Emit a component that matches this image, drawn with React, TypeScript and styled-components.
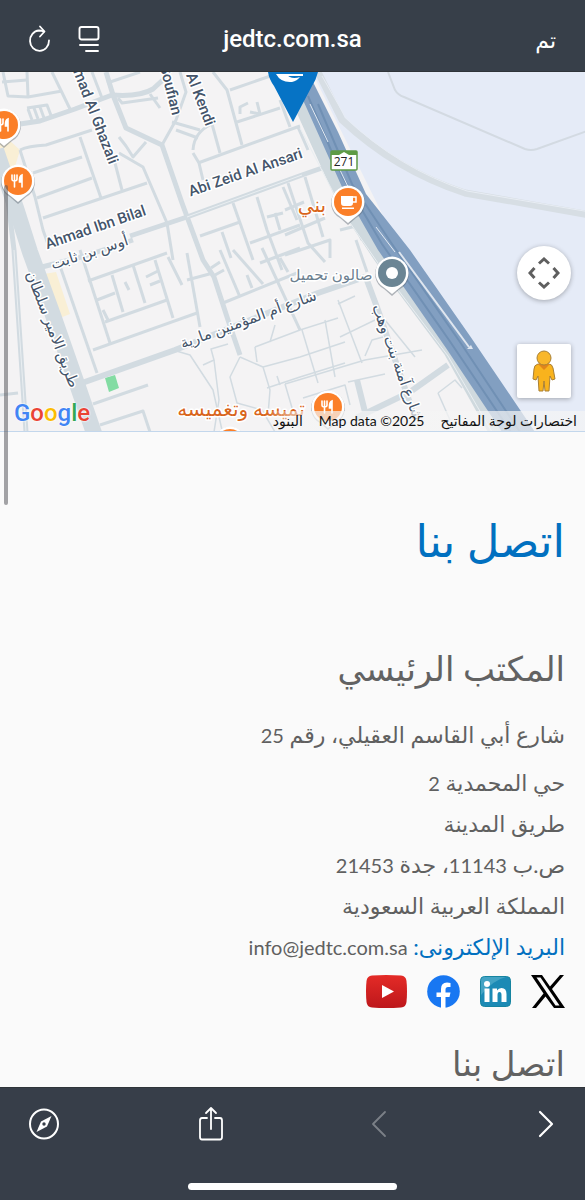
import React from "react";
import styled, { createGlobalStyle } from "styled-components";

const GlobalStyle = createGlobalStyle`
  * { box-sizing: border-box; }
  html, body { margin: 0; padding: 0; background: #fafafa; }
  body { font-family: Lato, "DejaVu Sans", sans-serif; }
`;

const Shell = styled.div`
  display: flex;
  flex-direction: column;
  height: 100vh;
  min-height: 480px;
`;

const TopBar = styled.header`
  display: grid;
  grid-template-columns: 1fr auto 1fr;
  align-items: center;
  flex: none;
  height: 72px;
  padding: 6px 25px 0;
  background: #373f49;
  border-bottom: 1px solid #2f3439;
  color: #fff;
`;

const BarGroup = styled.div<{ $end?: boolean }>`
  display: flex;
  align-items: center;
  gap: 25px;
  justify-content: ${(p) => (p.$end ? "flex-end" : "flex-start")};
`;

const IconButton = styled.button<{ $w: number; $h: number }>`
  display: grid;
  place-items: center;
  width: ${(p) => p.$w}px;
  height: ${(p) => p.$h}px;
  padding: 0;
  border: 0;
  background: none;
  color: #fff;
  &:disabled { color: #7b8087; }
`;

const Host = styled.div`
  font: 500 24px/32px Roboto, sans-serif;
`;

const DoneButton = styled.button`
  padding: 4px 4px 0;
  border: 0;
  background: none;
  color: #fff;
  font: 400 22px/32px "DejaVu Sans", sans-serif;
`;

const Viewport = styled.div`
  position: relative;
  flex: 1;
  min-height: 0;
`;

const Scroller = styled.main`
  height: 100%;
  overflow-y: auto;
  scrollbar-width: none;
  background: #fafafa;
`;

const ScrollThumb = styled.div`
  position: absolute;
  top: 113px;
  left: 4px;
  width: 4px;
  height: 320px;
  border-radius: 2px;
  background: rgba(90, 90, 94, 0.55);
`;

const MapFrame = styled.section`
  position: relative;
  height: 360px;
  overflow: hidden;
  border-bottom: 1px solid #c3d7ec;
  background: #f4f3f4;
`;

const MapArt = styled.svg`
  display: block;
  width: 100%;
  height: 100%;
`;

const MapControls = styled.div`
  position: absolute;
  top: 174px;
  right: 14px;
  display: grid;
  gap: 44px;
`;

const MapButton = styled.button<{ $round?: boolean }>`
  display: grid;
  place-items: center;
  width: 54px;
  height: 54px;
  padding: 0;
  border: 0;
  border-radius: ${(p) => (p.$round ? "50%" : "2px")};
  background: #fff;
  box-shadow: 0 1px 5px rgba(0, 0, 0, 0.3);
`;

const GoogleMark = styled.a`
  position: absolute;
  left: 14px;
  bottom: 2px;
  font: 500 24px/32px Roboto, sans-serif;
  text-decoration: none;
  text-shadow: 0 0 2px #fff, 0 0 2px #fff;
`;

const Tint = styled.span<{ $c: string }>`
  color: ${(p) => p.$c};
`;

const Attribution = styled.div`
  position: absolute;
  right: 0;
  bottom: 0;
  display: flex;
  gap: 16px;
  padding: 0 8px;
  background: linear-gradient(90deg, transparent 0, rgba(245, 245, 245, 0.7) 40px);
  color: #111;
  font: 400 14px/20px Lato, "DejaVu Sans", sans-serif;
`;

const PlainButton = styled.button`
  padding: 0;
  border: 0;
  background: none;
  color: inherit;
  font: inherit;
`;

const PlainLink = styled.a`
  color: inherit;
  text-decoration: none;
`;

const Contact = styled.section`
  padding: 72px 20px 0;
`;

const Title = styled.h1`
  margin: 0 0 62px;
  color: #0170c0;
  font-size: 45px;
  font-weight: 400;
  line-height: 72px;
`;

const Subtitle = styled.h2`
  margin: 0 0 16px;
  color: #626262;
  font-size: 34px;
  font-weight: 400;
  line-height: 60px;
`;

const Line = styled.p<{ $spaced?: boolean }>`
  margin: 0 0 ${(p) => (p.$spaced ? 7 : 0)}px;
  color: #606060;
  font-size: 22px;
  line-height: 41px;
`;

const Latin = styled.span`
  font-size: 20px;
  line-height: 1;
`;

const MailLabel = styled.span`
  color: #0170c0;
`;

const MailLink = styled.a`
  color: inherit;
  font-size: 20px;
  line-height: 1;
  text-decoration: none;
`;

const Socials = styled.nav`
  display: flex;
  align-items: center;
  gap: 20px;
  height: 48px;
  margin-bottom: 18px;
`;

const SocialLink = styled.a`
  display: block;
  line-height: 0;
`;

const BottomBar = styled.footer`
  display: flex;
  flex-direction: column;
  align-items: center;
  justify-content: space-between;
  flex: none;
  height: 113px;
  padding: 14px 0 10px;
  background: #373e49;
  border-top: 1px solid #2f3439;
`;

const NavRow = styled.nav`
  display: flex;
  justify-content: space-between;
  width: 100%;
  padding: 0 17px 0 22px;
`;

const HomeIndicator = styled.div`
  width: 209px;
  height: 7px;
  border-radius: 4px;
  background: #fff;
`;

const RoadLabel = styled.text`
  font: 500 15px Roboto, "DejaVu Sans", sans-serif;
  fill: #44546a;
  stroke: #fff;
  stroke-width: 3px;
  stroke-linejoin: round;
  paint-order: stroke;
  text-anchor: middle;
`;

const PlaceLabel = styled(RoadLabel)<{ $c: string; $large?: boolean }>`
  font-weight: 400;
  font-size: ${(p) => (p.$large ? 20 : 15)}px;
  fill: ${(p) => p.$c};
`;

const minorRoads = [
  "M3 72 L8 96 L28 97 L62 91",
  "M27 72 L28 96", "M52 72 L70 109", "M92 72 L102 98", "M2 82 L27 80",
  "M107 83 L140 72", "M118 98 L122 103 L158 98", "M150 94 L160 108",
  "M20 150 Q28 146 46 145 L92 130", "M20 150 L35 197 L43 230 L50 250",
  "M80 137 L101 198", "M33 173 L82 157", "M37 198 L92 178", "M43 218 L147 183",
  "M115 163 L122 190", "M119 137 L126 146 L133 157 L146 142",
  "M119 153 L143 167 L167 223 L173 260",
  "M162 145 L176 120 L186 92 L180 72",
  "M172 122 L200 130 M176 130 L198 138",
  "M193 153 L199 163 L203 180", "M193 150 Q194 132 212 124",
  "M212 124 L220 153", "M198 163 L300 126",
  "M213 72 L227 90 L242 145", "M230 90 L282 72", "M237 122 L280 108", "M280 100 L290 127",
  "M240 114 V107 L248 103 M250 112 L260 114 L257 102",
  "M233 203 L253 260", "M200 236 L240 222", "M222 232 L231 258",
  "M257 197 L267 230 L282 270", "M283 187 L297 220", "M250 243 L300 225",
  "M267 217 L283 213 M275 213 L280 230",
  "M298 127 L308 150", "M288 183 L308 243 L325 262", "M305 177 L323 237",
  "M285 210 L304 202", "M285 235 L325 218", "M285 255 L330 240 L330 258",
  "M340 230 L356 226 L362 240", "M356 240 L367 272",
  "M60 266 L97 373", "M80 250 L110 343", "M88 281 L167 253",
  "M93 350 L197 313", "M105 322 L167 300", "M112 275 L123 312", "M133 265 L145 303",
  "M155 260 L173 318", "M168 257 L182 285", "M187 253 L200 327",
  "M187 280 L213 273", "M97 300 L115 293", "M103 310 L108 320 M125 282 L129 290 M146 277 L158 271 M150 285 L160 281",
  "M223 303 L297 273", "M260 263 L300 248", "M233 250 L263 284", "M220 250 L240 297",
  "M211 268 L220 262 M215 275 L224 270 M247 275 L252 288",
  "M280 258 L288 272 M262 248 L300 330",
  "M93 404 L148 385", "M100 425 L143 411 L150 432", "M0 395 L18 393",
];

const lanes = [
  "M173 350 L190 355 L213 390 L222 430", "M203 365 L214 360 L211 349 L228 344",
  "M214 360 L219 400 L214 432", "M240 357 L230 377 L237 403 L262 410 L275 432",
  "M240 357 L263 367 L270 390 L268 415", "M255 347 L300 330 L338 318", "M255 347 L257 362",
  "M263 367 L300 357 L345 342", "M267 388 L300 377 L345 363",
  "M277 376 L280 385 M285 384 L295 418", "M270 342 L275 325",
  "M302 330 L318 383", "M325 320 L335 377", "M338 300 L362 363 M338 304 L355 296",
  "M285 384 L365 360 L422 350", "M348 382 L385 374", "M365 356 L372 340 L383 337",
  "M375 320 L340 337", "M385 320 L415 357", "M303 398 L345 385 L350 405",
  "M438 393 L455 380 L462 388", "M438 393 L450 420",
];

const roads = [
  "M20 124 L40 121 L75 109 L112 95 Q140 97 153 89 L166 77",
  "M106 72 L113 95 L126 128 L162 145 L182 203 L203 260 L214 277 L228 320 L240 355",
  "M130 236 L187 217 L302 175 L322 168",
  "M8 200 L14 250 L26 432",
  "M38 268 L85 256 L133 240",
];

const mainRoads = [
  "M82 383 L175 350 L318 293 L365 277",
  "M365 275 L378 310 L390 345 L413 412",
  "M356 418 L410 392 L448 365",
  "M357 380 L366 416",
];

function Fork() {
  return (
    <g fill="none" stroke="#fff" strokeWidth="1.6" strokeLinecap="round">
      <path d="M-6 -6 V-2 Q-6 0 -3.5 0 Q-1 0 -1 -2 V-6 M-3.5 -6 V6" />
      <path d="M4 6 V-6 Q1.500 -5 1.500 -1 V1 H4" fill="#fff" />
    </g>
  );
}

function Pin({ x, y, color, children }: { x: number; y: number; color: string; children: React.ReactNode }) {
  return (
    <g transform={`translate(${x} ${y})`}>
      <path d="M0 22 L-8 15 A17 17 0 1 1 8 15 Z" fill="#5b6570" opacity="0.45" transform="translate(0 1)" />
      <path d="M0 21 L-8 14.500 A16.500 16.500 0 1 1 8 14.500 Z" fill="#fff" />
      <circle r="14" fill={color} />
      {children}
    </g>
  );
}

function CityMap() {
  return (
    <MapArt viewBox="0 72 585 360" preserveAspectRatio="xMidYMin slice" role="img" aria-label="خريطة الموقع">
      <rect x="-600" y="72" width="1800" height="360" fill="#f4f3f4" />
      <path d="M312 72 H1200 V432 H530 L400 250 Z" fill="#e5ebf7" />
      <path d="M0 132 L20 150 L14 170 L6 164 L0 150 Z M44 274 L56 272 L70 314 L60 318 Z" fill="#f9efd5" />
      <path d="M105 378 L115 375 L119 388 L109 392 Z" fill="#83dca3" />
      <g fill="none" stroke="#d2dbe1" strokeLinejoin="round">
        <g strokeWidth="1.500">{lanes.map((d) => <path key={d} d={d} />)}</g>
        <g strokeWidth="3">{minorRoads.map((d) => <path key={d} d={d} />)}</g>
        <g strokeWidth="5">{roads.map((d) => <path key={d} d={d} />)}</g>
        <g strokeWidth="6">{mainRoads.map((d) => <path key={d} d={d} />)}</g>
        <path d="M27 108 L47 105 L52 118 M32 120 L28 109 M38 119 L34 108 M44 118 L40 107" strokeWidth="3" />
        <path d="M-4 150 L16 208 L30 252 L54 318 L77 384 L95 436" strokeWidth="16" />
        <path d="M293 72 L303 112 L345 205 L380 258 L450 352 L496 434" strokeWidth="12" stroke="#cfd9de" />
      </g>
      <path d="M14 250 L26 432 M187 217 L302 175 M300 128 L346 217 L380 266 L448 356 L492 432" fill="none" stroke="#e9eef1" strokeWidth="1" />

      <path d="M318 72 L342 120 Q395 170 465 193 L590 215" fill="none" stroke="#d7dee4" strokeWidth="7" />
      <path d="M322 76 L346 118 Q398 168 467 191 L590 212" fill="none" stroke="#e8edf4" strokeWidth="1" />
      <path d="M388 72 L395 90 Q398 95 404 97 L525 149 Q531 151 537 149 L590 130" fill="none" stroke="#d3dae2" strokeWidth="2" />

      <path d="M296 72 H308 L338 132 L366 194 L410 250 L470 336 L535 432 H502 L446 348 L378 250 L342 187 L303 100 Z" fill="#829fc1" />
      <path d="M308 96 L342 176 L382 244 L449 340 L511 432 M318 104 L352 184 L392 244 L460 342 L520 432" fill="none" stroke="#7090b4" strokeWidth="2" />
      <path d="M310 104 L328 142 M340 170 L351 193 M376 227 L395 252" fill="none" stroke="#e2e9f2" strokeWidth="1" />
      <path d="M399 252 L469 347" fill="none" stroke="#dfe6ef" strokeWidth="2" />
      <path d="M467 349 L471 345 L473 349 Z" fill="#dfe6ef" />

      <RoadLabel transform="translate(91 118) rotate(69)">mad Al Ghazali</RoadLabel>
      <RoadLabel transform="translate(166 91) rotate(76)">Soufian</RoadLabel>
      <RoadLabel transform="translate(196 101) rotate(69)">Al Kendi</RoadLabel>
      <RoadLabel transform="translate(247 177) rotate(-19)">Abi Zeid Al Ansari</RoadLabel>
      <RoadLabel transform="translate(97 232) rotate(-19)">Ahmad Ibn Bilal</RoadLabel>
      <RoadLabel transform="translate(91 257) rotate(-18)">أوس بن ثابت</RoadLabel>
      <RoadLabel transform="translate(250 324) rotate(-20)">شارع أم المؤمنين مارية</RoadLabel>
      <RoadLabel transform="translate(48 331) rotate(69)">طريق الامير سلطان</RoadLabel>
      <RoadLabel transform="translate(393 364) rotate(70)">شارع آمنة بنت وهب</RoadLabel>
      <PlaceLabel $c="#d9651b" $large x="312" y="212">بني</PlaceLabel>
      <PlaceLabel $c="#6c8090" x="331" y="280">صالون تحميل</PlaceLabel>
      <PlaceLabel $c="#d9651b" $large x="241" y="416">تميسه وتغميسه</PlaceLabel>

      <Pin x={4} y={125} color="#fb7f28"><Fork /></Pin>
      <Pin x={18} y={181} color="#fb7f28"><Fork /></Pin>
      <Pin x={328} y={407} color="#fb7f28"><Fork /></Pin>
      <Pin x={230} y={443} color="#fb7f28"><Fork /></Pin>
      <Pin x={348} y={202} color="#fb7f28">
        <path d="M-7 -6 H5 V1 Q5 4 2 4 H-4 Q-7 4 -7 1 Z M-6 5.500 H6 V7 H-6 Z" fill="#fff" />
        <path d="M5 -5 H8 V0 H5" fill="none" stroke="#fff" strokeWidth="1.500" />
      </Pin>
      <Pin x={392} y={273} color="#6b8594"><circle r="6" fill="#fff" /></Pin>

      <rect x="331" y="151" width="26" height="19" rx="1" fill="#fff" stroke="#5e9b45" strokeWidth="1.500" />
      <path d="M331 151 H357 V155 H349 L344 152 L339 155 H331 Z" fill="#5e9b45" />
      <text x="344" y="166" textAnchor="middle" fontFamily="Open Sans" fontSize="12" fill="#222">271</text>

      <path d="M268 72 H318 Q316 80 312 86 L293 122 L274 86 Q269 79 268 72 Z" fill="#0673c5" />
      <path d="M276 74 Q281 83 292 82 Q297 81 300 77 Q291 80 286 74 Z" fill="#fff" />
      <path d="M286 75 H303" stroke="#fff" strokeWidth="2" />
    </MapArt>
  );
}

export default function App() {
  return (
    <Shell>
      <GlobalStyle />
      <TopBar>
        <BarGroup>
          <IconButton $w={28} $h={32} aria-label="إعادة التحميل">
            <svg width="24" height="28" viewBox="0 0 24 28" fill="none" stroke="currentColor" strokeWidth="1.800" strokeLinecap="round" strokeLinejoin="round">
              <path d="M17 6.500 Q14.500 5.500 12 5.500 A9.500 10.200 0 1 0 22 15.500" />
              <path d="M13 1.500 L17.500 6.500 L13 11.500" />
            </svg>
          </IconButton>
          <IconButton $w={22} $h={32} aria-label="إعدادات الصفحة">
            <svg width="22" height="28" viewBox="0 0 22 28" fill="none" stroke="currentColor" strokeWidth="1.900" strokeLinecap="round">
              <rect x="1.500" y="2" width="19" height="12.500" rx="2" />
              <path d="M2 20 H20 M8 26 H20" />
            </svg>
          </IconButton>
        </BarGroup>
        <Host>jedtc.com.sa</Host>
        <BarGroup $end>
          <DoneButton>تم</DoneButton>
        </BarGroup>
      </TopBar>

      <Viewport>
        <Scroller dir="rtl" lang="ar">
          <MapFrame>
            <CityMap />
            <GoogleMark href="#google" dir="ltr" aria-label="Google">
              <Tint $c="#4285f4">G</Tint>
              <Tint $c="#ea4335">o</Tint>
              <Tint $c="#fbbc05">o</Tint>
              <Tint $c="#4285f4">g</Tint>
              <Tint $c="#34a853">l</Tint>
              <Tint $c="#ea4335">e</Tint>
            </GoogleMark>
            <MapControls>
              <MapButton $round aria-label="تحريك الخريطة">
                <svg width="32" height="32" viewBox="0 0 32 32" fill="none" stroke="#5f5f5f" strokeWidth="3">
                  <path d="M11 6.500 L16 2 L21 6.500 M11 25.500 L16 30 L21 25.500 M6.500 11 L2 16 L6.500 21 M25.500 11 L30 16 L25.500 21" />
                </svg>
              </MapButton>
              <MapButton aria-label="التجوّل الافتراضي">
                <svg width="26" height="42" viewBox="0 0 26 42">
                  <path d="M7 14 Q3 15 3 19 L2 29 L5 30 L7 26 L8 41 H12 L13 31 L14 41 H18 L19 26 L21 30 L24 29 L22 18 Q21 14 18 14 Z" fill="#f9b31d" stroke="#a98034" />
                  <path d="M7 14 L13 20 L19 14 Z" fill="#e0851b" />
                  <circle cx="13" cy="8" r="7" fill="#f9b72a" stroke="#a98034" />
                </svg>
              </MapButton>
            </MapControls>
            <Attribution>
              <PlainButton>اختصارات لوحة المفاتيح</PlainButton>
              <span dir="ltr">Map data ©2025</span>
              <PlainLink href="#terms">البنود</PlainLink>
            </Attribution>
          </MapFrame>

          <Contact>
            <Title>اتصل بنا</Title>
            <Subtitle>المكتب الرئيسي</Subtitle>
            <Line $spaced>شارع أبي القاسم العقيلي، رقم <Latin>25</Latin></Line>
            <Line>حي المحمدية <Latin>2</Latin></Line>
            <Line>طريق المدينة</Line>
            <Line>ص.ب <Latin>11143</Latin>، جدة <Latin>21453</Latin></Line>
            <Line>المملكة العربية السعودية</Line>
            <Line>
              <MailLabel>البريد الإلكترونى:</MailLabel>{" "}
              <MailLink href="mailto:info@jedtc.com.sa">info@jedtc.com.sa</MailLink>
            </Line>
            <Socials aria-label="التواصل الاجتماعي">
              <SocialLink href="#x" aria-label="X">
                <svg width="34" height="33" viewBox="0 0 34 33">
                  <path d="M0 0 H11 L19 11.500 L29 0 H33 L21 14 L34 33 H23 L14.500 21.500 L5 33 H1 L12.500 18.500 Z" fill="#000" />
                  <path d="M5.500 2.500 H9.500 L28.500 30.500 H24.500 Z" fill="#fafafa" />
                </svg>
              </SocialLink>
              <SocialLink href="#linkedin" aria-label="LinkedIn">
                <svg width="31" height="31" viewBox="0 0 31 31">
                  <rect x="0.500" y="0.500" width="30" height="30" rx="4" fill="#1c8ab5" stroke="#1684a0" />
                  <path d="M1 5 Q1 1 5 1 H26 Q13 4 1 19 Z" fill="#43a3c4" />
                  <circle cx="7" cy="8" r="3" fill="#fff" />
                  <path d="M4.500 12.500 H9.500 V26 H4.500 Z M12.500 12.500 H17 V14.500 Q18.500 12 21.500 12 Q26.500 12 26.500 18 V26 H21.500 V19 Q21.500 16 19.500 16 Q17.500 16 17.500 19 V26 H12.500 Z" fill="#fff" />
                </svg>
              </SocialLink>
              <SocialLink href="#facebook" aria-label="Facebook">
                <svg width="33" height="33" viewBox="0 0 33 33">
                  <circle cx="16.500" cy="16.500" r="16.300" fill="#1877f2" />
                  <path d="M14 33 V22 H9.500 V17.500 H14 V14 Q14 7.500 20 7.500 Q22 7.500 23.500 8 V12 H21 Q18.500 12 18.500 14.500 V17.500 H23.500 L22.500 22 H18.500 V33 Z" fill="#fff" />
                </svg>
              </SocialLink>
              <SocialLink href="#youtube" aria-label="YouTube">
                <svg width="41" height="33" viewBox="0 0 41 33">
                  <defs>
                    <linearGradient id="yt" x1="0" y1="0" x2="0" y2="1">
                      <stop offset="0" stopColor="#e42b27" />
                      <stop offset="1" stopColor="#bd171b" />
                    </linearGradient>
                  </defs>
                  <path d="M6 0.500 Q20 -0.500 35 0.500 Q40 1 40.500 6 Q41.500 16 40.500 27 Q40 32 35 32.500 Q20 33.500 6 32.500 Q1 32 0.500 27 Q-0.500 16 0.500 6 Q1 1 6 0.500 Z" fill="url(#yt)" />
                  <path d="M16 10 L28 16.500 L16 23 Z" fill="#fff" />
                </svg>
              </SocialLink>
            </Socials>
            <Subtitle>اتصل بنا</Subtitle>
          </Contact>
        </Scroller>
        <ScrollThumb />
      </Viewport>

      <BottomBar>
        <NavRow aria-label="أدوات المتصفح">
          <IconButton $w={44} $h={44} aria-label="فتح في المتصفح">
            <svg width="32" height="34" viewBox="0 0 32 34" fill="none">
              <ellipse cx="16" cy="17" rx="14" ry="14.500" stroke="currentColor" strokeWidth="2" />
              <path d="M23.500 9 L19 19.500 L8.500 25 L13 14.500 Z" fill="currentColor" />
              <circle cx="16" cy="17" r="1.700" fill="#373e49" />
            </svg>
          </IconButton>
          <IconButton $w={44} $h={44} aria-label="مشاركة">
            <svg width="28" height="36" viewBox="0 0 28 36" fill="none" stroke="currentColor" strokeWidth="1.800" strokeLinecap="round" strokeLinejoin="round">
              <path d="M10 12 H5 Q3 12 3 14.500 V31 Q3 33.500 5 33.500 H23 Q25 33.500 25 31 V14.500 Q25 12 23 12 H18" />
              <path d="M14 23 V2 M9 7 L14 2 L19 7" />
            </svg>
          </IconButton>
          <IconButton $w={44} $h={44} disabled aria-label="السابق">
            <svg width="16" height="28" viewBox="0 0 16 28" fill="none" stroke="currentColor" strokeWidth="1.800" strokeLinecap="round" strokeLinejoin="round">
              <path d="M14 2 L2 14 L14 26" />
            </svg>
          </IconButton>
          <IconButton $w={44} $h={44} aria-label="التالي">
            <svg width="16" height="28" viewBox="0 0 16 28" fill="none" stroke="currentColor" strokeWidth="2.200" strokeLinecap="round" strokeLinejoin="round">
              <path d="M2 2 L14 14 L2 26" />
            </svg>
          </IconButton>
        </NavRow>
        <HomeIndicator />
      </BottomBar>
    </Shell>
  );
}
